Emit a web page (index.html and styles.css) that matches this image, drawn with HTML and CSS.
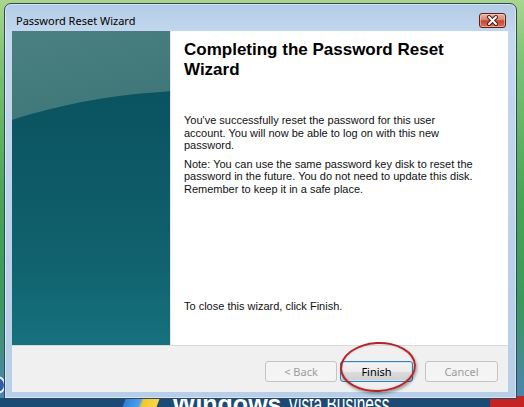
FILE: index.html
```html
<!DOCTYPE html>
<html lang="en">
<head>
  <meta charset="UTF-8" />
  <meta name="viewport" content="width=device-width, initial-scale=1.0"/>
  <title>Password Reset Wizard</title>
  <link rel="stylesheet" href="styles.css">
</head>
<body>

  <div class="desktop">
    <div class="desk-icon"></div>
    <div class="desk-logo"></div>
    <div class="desk-brand"><b>Windows</b> <span class="edition">Vista Business</span></div>
    <div class="desk-badge"></div>

    <div class="window">
      <div class="titlebar">
        <span class="title">Password Reset Wizard</span>
        <button class="close" aria-label="Close">
          <svg width="25" height="13" viewBox="0 0 25 13">
            <path d="M9 3 L16 10 M16 3 L9 10" stroke="#4a1a12" stroke-width="4" stroke-linecap="round"/>
            <path d="M9 3 L16 10 M16 3 L9 10" stroke="#fff" stroke-width="2" stroke-linecap="round"/>
          </svg>
        </button>
      </div>

      <div class="client">
        <div class="page">
          <div class="side-art"></div>
          <div class="content">
            <h1>Completing the Password Reset<br>Wizard</h1>
            <p class="first">You've successfully reset the password for this user<br>account. You will now be able to log on with this new<br>password.</p>
            <p class="note">Note: You can use the same password key disk to reset the<br>password in the future. You do not need to update this disk.<br>Remember to keep it in a safe place.</p>
            <p class="closing">To close this wizard, click Finish.</p>
          </div>
        </div>
        <div class="buttons">
          <button class="btn" disabled>&lt; Back</button>
          <button class="btn default">Finish</button>
          <button class="btn cancel" disabled>Cancel</button>
        </div>
      </div>
    </div>

    <!-- hand-drawn circle around the Finish button -->
    <div class="highlight"></div>
  </div>

</body>
</html>
```

FILE: styles.css
```css
body {
  margin: 0;
  background: #1c4a72;
}

.desktop {
  width: 524px;
  height: 407px;
  position: relative;
  overflow: hidden;
  background:
    linear-gradient(to bottom, transparent 398px, #1b4b74 398px),
    linear-gradient(to bottom, #a9d68c 0, #7cc474 60px, #46a556 200px, #3a9a5a 300px, #4a86a8 390px);
}

/* wallpaper bits peeking out under the window */
.desk-icon {
  position: absolute;
  left: -12px;
  top: 376px;
  width: 14px;
  height: 14px;
  border-radius: 50%;
  border: 2px solid #e8f0ff;
  background: #2d5fa8;
}

.desk-logo {
  position: absolute;
  left: 124px;
  top: 396px;
  width: 34px;
  height: 14px;
  transform: skewX(-20deg);
  background: linear-gradient(to right, #2c7fd8 0, #4aa0f0 45%, #f5c52a 55%, #f7d84a 100%);
}

.desk-brand {
  position: absolute;
  left: 172px;
  top: 389px;
  font-family: "Liberation Sans", Arial, sans-serif;
  font-size: 25px;
  line-height: 30px;
  color: #fff;
  white-space: nowrap;
}

.desk-brand .edition {
  display: inline-block;
  transform: scaleX(0.62);
  transform-origin: left center;
}

.desk-badge {
  position: absolute;
  left: 490px;
  top: 396px;
  width: 40px;
  height: 20px;
  background: #c42424;
  border-radius: 4px;
}

.window {
  position: relative;
  z-index: 2;
  margin: 3px 0 0 4px;
  width: 496px;
  padding: 0 8px 6px 7px;
  border: 1px solid #33475c;
  border-radius: 7px 7px 0 0;
  background: linear-gradient(to bottom, #b3cce6 0, #c4d8ee 30px, #bcd3ea 200px, #b6cee7 100%);
  box-shadow: inset 0 0 0 1px rgba(255, 255, 255, 0.45);
}

.titlebar {
  height: 27px;
  display: flex;
  justify-content: space-between;
  align-items: flex-start;
  padding-top: 9px;
  box-sizing: border-box;
}

.title {
  padding-left: 4px;
  font-family: "Noto Sans", sans-serif;
  font-size: 11px;
  color: #000;
}

.close {
  width: 27px;
  height: 15px;
  margin: 0 2px 0 0;
  padding: 0;
  border: 1px solid #5e2016;
  border-radius: 3px;
  background: linear-gradient(to bottom, #eab3a5 0, #d98572 45%, #c6452e 52%, #d4725c 100%);
  box-shadow: inset 0 0 0 1px rgba(255, 220, 210, 0.5);
  display: flex;
  align-items: center;
  justify-content: center;
}

.client {
  width: 496px;
  height: 361px;
  display: flex;
  flex-direction: column;
  background: #f0f0f0;
}

.page {
  display: flex;
  height: 314px;
}

.side-art {
  width: 158px;
  position: relative;
  overflow: hidden;
  background: linear-gradient(165deg, #4a8081 0%, #3a7273 45%, #2c686b 100%);
}

.side-art::before {
  content: "";
  position: absolute;
  left: -180px;
  top: 59px;
  width: 760px;
  height: 400px;
  border-radius: 50%;
  background: linear-gradient(to bottom, #0a5360 0%, #0d5966 20%, #11636f 45%, #16717f 64%);
}

.content {
  flex: 1;
  display: flex;
  flex-direction: column;
  padding: 9px 0 33px 13px;
  background: #fff;
  border-left: 1px solid #e6e6e6;
  font-family: "Liberation Sans", Arial, sans-serif;
  color: #111;
}

h1 {
  margin: 0;
  font-size: 17px;
  line-height: 20px;
  font-weight: bold;
  color: #000;
}

p {
  margin: 0;
  font-size: 11px;
  line-height: 12.5px;
}

p.first {
  margin-top: 34px;
}

p.note {
  margin-top: 6px;
}

p.closing {
  margin-top: auto;
}

.buttons {
  flex: 1;
  display: flex;
  justify-content: flex-end;
  align-items: flex-start;
  gap: 3px;
  padding: 15px 10px 0 0;
  border-top: 1px solid #dadada;
}

.btn {
  width: 73px;
  height: 21px;
  padding: 0;
  border: 1px solid #a8a8a8;
  border-radius: 3px;
  background: linear-gradient(to bottom, #f3f3f3 0, #ececec 50%, #dddddd 50%, #cfcfcf 100%);
  font-family: "Noto Sans", sans-serif;
  font-size: 11px;
  color: #000;
}

.btn:disabled {
  border-color: #c4c4c4;
  background: #f4f4f4;
  color: #9c9c9c;
}

.btn:first-child {
  width: 72px;
}

.btn.default {
  border-color: #3b7fb4;
  box-shadow: inset 0 0 0 1px #c9e6f7;
}

.btn.cancel {
  margin-left: 9px;
}

.highlight {
  position: absolute;
  z-index: 3;
  left: 340px;
  top: 342px;
  width: 72px;
  height: 46px;
  border: 2px solid #b3252c;
  border-radius: 50%;
  box-shadow: 1px 2px 3px rgba(0, 0, 0, 0.35), inset 0 0 2px rgba(120, 0, 0, 0.3);
  transform: rotate(-3deg);
}
```
